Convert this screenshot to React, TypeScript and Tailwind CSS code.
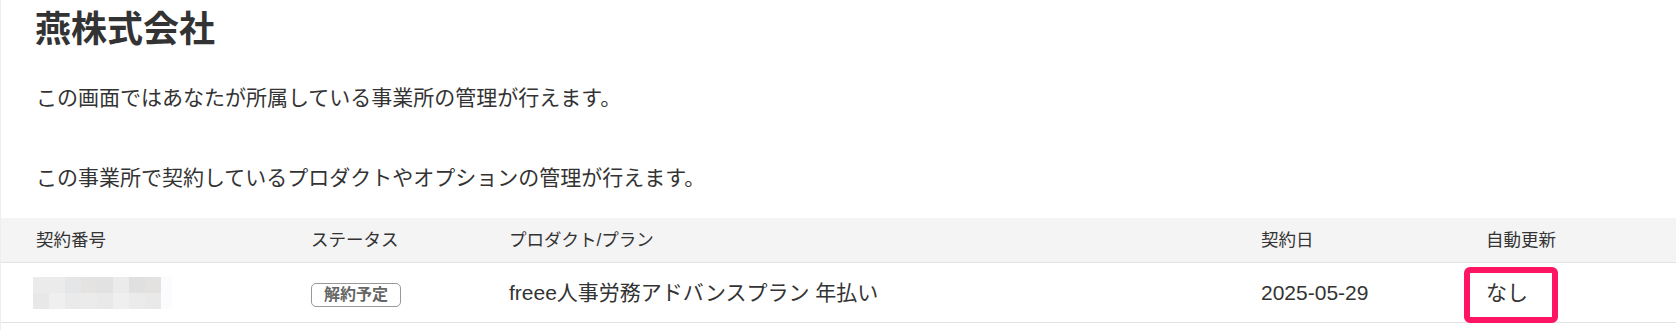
import React from "react";

const blurRows: string[][] = [
  ["#ebebeb", "#ebebeb", "#e4e6e8", "#e4e3e1", "#e2e2e2", "#ebebeb", "#e0e0e0", "#e3e2e0"],
  ["#e8e8e8", "#efefef", "#eaeaea", "#ebebeb", "#e9e9e9", "#efefef", "#ebebeb", "#e9e9e9"],
];

export default function App() {
  return (
    <div
      className="w-[1676px] h-[330px] bg-white text-[#333333] border-l border-[#eeeeee] overflow-hidden"
      style={{ fontFamily: '"Liberation Sans", "Noto Sans CJK JP", sans-serif' }}
    >
      <h1 className="pl-[34px] pt-[5px] text-[36px] leading-[50px] font-bold text-[#333333]">燕株式会社</h1>
      <p className="pl-[35px] mt-[27px] text-[21px] leading-[31px]">この画面ではあなたが所属している事業所の管理が行えます。</p>
      <p className="pl-[35px] mt-[49px] text-[21px] leading-[31px]">この事業所で契約しているプロダクトやオプションの管理が行えます。</p>

      <div className="mt-[25px]">
        <div className="flex items-center h-[45px] pl-[35px] bg-[#f5f4f5] border-b border-[#e3e3e3] text-[17.5px]">
          <div className="w-[275px]">契約番号</div>
          <div className="w-[198px]">ステータス</div>
          <div className="w-[752px]">プロダクト/プラン</div>
          <div className="w-[225px]">契約日</div>
          <div className="flex-1">自動更新</div>
        </div>
        <div className="flex items-center h-[60px] pl-[35px] border-b border-[#e3e3e3] text-[21px]">
          <div className="w-[275px]">
            <div className="flex flex-col ml-[-3px]">
              {blurRows.map((row, i) => (
                <div key={i} className="flex">
                  {row.map((c, j) => (
                    <div key={j} className="w-[16px] h-[16px]" style={{ backgroundColor: c }} />
                  ))}
                  <div className="w-[11px] h-[16px] bg-[#fcfcfe]" />
                </div>
              ))}
            </div>
          </div>
          <div className="w-[198px]">
            <span className="inline-block border border-[#999999] rounded-[5px] px-[12px] py-[2px] text-[16px] leading-[18px] font-bold text-[#666666]">
              解約予定
            </span>
          </div>
          <div className="w-[752px]">freee人事労務アドバンスプラン 年払い</div>
          <div className="w-[225px]">2025-05-29</div>
          <div className="flex-1 relative h-full flex items-center">
            <span>なし</span>
            <div className="absolute left-[-22px] top-[4px] w-[94px] h-[56px] border-[6px] border-[#ff1561] rounded-[6px]" />
          </div>
        </div>
      </div>
    </div>
  );
}
